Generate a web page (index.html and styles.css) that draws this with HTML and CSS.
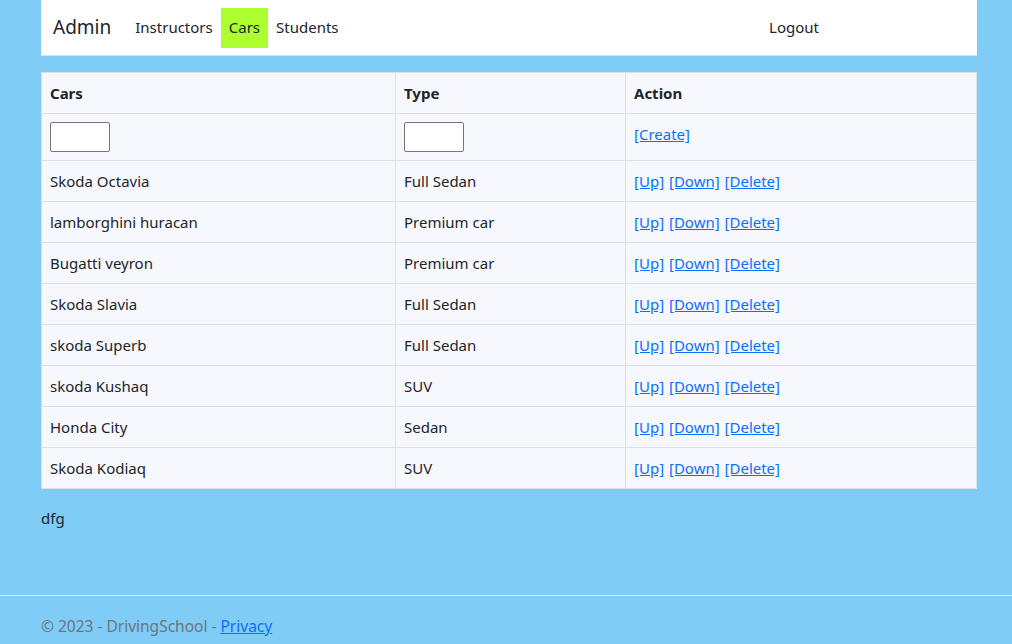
FILE: index.html
```html
<!DOCTYPE html>
<html lang="en">
<head>
<meta charset="utf-8">
<title>Cars - DrivingSchool</title>
<link rel="stylesheet" href="styles.css">
</head>
<body>
<div class="container">
  <nav class="navbar">
    <a class="brand" href="#">Admin</a>
    <ul class="nav">
      <li><a class="nav-link" href="#">Instructors</a></li>
      <li><a class="nav-link active" href="#">Cars</a></li>
      <li><a class="nav-link" href="#">Students</a></li>
    </ul>
    <ul class="nav nav-right">
      <li><a class="nav-link" href="#">Logout</a></li>
    </ul>
  </nav>
</div>
<main class="container main">
  <table class="table">
    <thead>
      <tr><th class="c1">Cars</th><th class="c2">Type</th><th>Action</th></tr>
    </thead>
    <tbody>
      <tr class="input-row"><td><input type="text"></td><td><input type="text"></td><td class="create"><a href="#">[Create]</a></td></tr>
      <tr><td>Skoda Octavia</td><td>Full Sedan</td><td class="act"><a href="#">[Up]</a> <a href="#">[Down]</a> <a href="#">[Delete]</a></td></tr>
      <tr><td>lamborghini huracan</td><td>Premium car</td><td class="act"><a href="#">[Up]</a> <a href="#">[Down]</a> <a href="#">[Delete]</a></td></tr>
      <tr><td>Bugatti veyron</td><td>Premium car</td><td class="act"><a href="#">[Up]</a> <a href="#">[Down]</a> <a href="#">[Delete]</a></td></tr>
      <tr><td>Skoda Slavia</td><td>Full Sedan</td><td class="act"><a href="#">[Up]</a> <a href="#">[Down]</a> <a href="#">[Delete]</a></td></tr>
      <tr><td>skoda Superb</td><td>Full Sedan</td><td class="act"><a href="#">[Up]</a> <a href="#">[Down]</a> <a href="#">[Delete]</a></td></tr>
      <tr><td>skoda Kushaq</td><td>SUV</td><td class="act"><a href="#">[Up]</a> <a href="#">[Down]</a> <a href="#">[Delete]</a></td></tr>
      <tr><td>Honda City</td><td>Sedan</td><td class="act"><a href="#">[Up]</a> <a href="#">[Down]</a> <a href="#">[Delete]</a></td></tr>
      <tr><td>Skoda Kodiaq</td><td>SUV</td><td class="act"><a href="#">[Up]</a> <a href="#">[Down]</a> <a href="#">[Delete]</a></td></tr>
    </tbody>
  </table>
  <p class="note">dfg</p>
</main>
<footer class="footer">
  <div class="container">&copy; 2023 - DrivingSchool - <a href="#">Privacy</a></div>
</footer>
</body>
</html>
```
FILE: styles.css
```css
html, body {
  margin: 0;
  padding: 0;
}
body {
  background: #7fccf6;
  color: #212529;
  font-family: "Noto Sans", "Open Sans", "Liberation Sans", sans-serif;
  font-size: 15px;
  line-height: 1.5;
  min-height: 100vh;
  display: flex;
  flex-direction: column;
  overflow: hidden;
}
.container {
  width: 936px;
  margin: 0 0 0 41px;
  box-sizing: border-box;
}
.navbar {
  background: #fff;
  border-bottom: 1px solid #dcdfe3;
  height: 56px;
  box-sizing: border-box;
  display: flex;
  align-items: center;
  padding: 0 12px;
}
.brand {
  font-size: 19px;
  color: #212529;
  text-decoration: none;
  margin-right: 16px;
}
.nav {
  list-style: none;
  margin: 0;
  padding: 0;
  display: flex;
}
.nav-right {
  margin-left: auto;
  margin-right: 138px;
}
.nav-link {
  display: block;
  padding: 8px 8px;
  height: 40px;
  box-sizing: border-box;
  color: #212529;
  text-decoration: none;
}
.nav-link.active {
  background: #adff2f;
}
.main {
  flex: 1;
  padding-top: 16px;
}
.table {
  width: 100%;
  border-collapse: collapse;
  background: #f7f8fd;
  border: 1px solid #dee2e6;
}
.table th, .table td {
  border: 1px solid #dee2e6;
  text-align: left;
  padding: 0 8px;
  height: 41px;
  box-sizing: border-box;
  vertical-align: middle;
}
.table th {
  font-weight: 700;
}
.c1 { width: 354px; }
.c2 { width: 230px; }
.table .input-row td {
  height: 47px;
}
.table .input-row td.create {
  padding-bottom: 5px;
}
input {
  width: 60px;
  height: 30px;
  box-sizing: border-box;
  border: 1px solid #767676;
  border-radius: 2px;
  background: #fff;
  display: block;
}
.table a {
  color: #0d6efd;
}
.act a {
  margin-right: 1px;
}
.note {
  margin: 18px 0 0;
}
.footer {
  border-top: 1px solid #d5ecfa;
  line-height: 60px;
  height: 61px;
  box-sizing: border-box;
  margin-bottom: -12px;
  color: #6c757d;
  font-size: 15.5px;
  white-space: nowrap;
}
.footer a {
  color: #0d6efd;
}
```
